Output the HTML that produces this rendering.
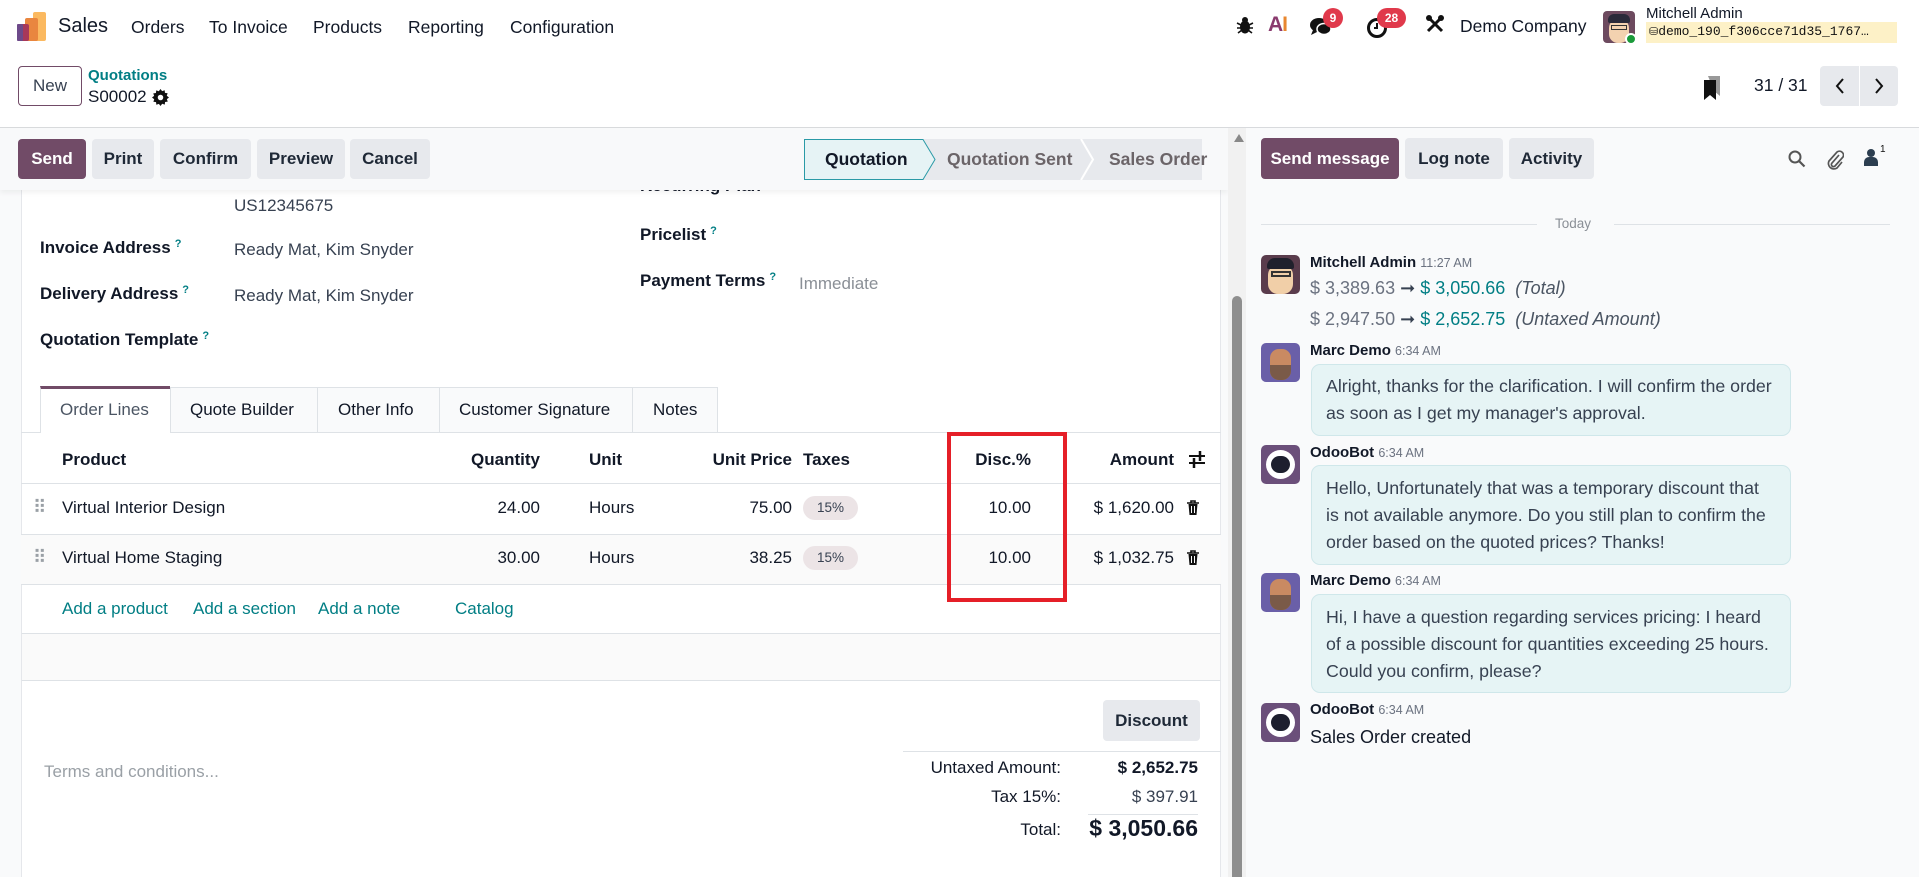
<!DOCTYPE html>
<html><head><meta charset="utf-8">
<style>
*{box-sizing:border-box;margin:0;padding:0}
body{width:1919px;height:877px;overflow:hidden;position:relative;background:#fff;font-family:"Liberation Sans",sans-serif;color:#374151;font-size:17px}
.a{position:absolute;white-space:nowrap}
.btn{position:absolute;border-radius:4px;background:#e7e9ed;color:#1f2937;font-weight:bold;font-size:17px;display:flex;align-items:center;justify-content:center}
.pr{background:#714b67;color:#fff}
.lbl{font-weight:bold;color:#111827}
.q{color:#017e84;font-size:11px;vertical-align:top;margin-left:4px}
.teal{color:#017e84}
.bub{position:absolute;left:1311px;width:480px;background:#e6f4f5;border:1px solid #cfe7ea;border-radius:9px;padding:0 14px;font-size:17.8px;line-height:27px;color:#374151}
.nm{font-weight:bold;color:#111827;font-size:15px}
.tm{color:#6b7280;font-size:12.5px;font-weight:normal}
.av{position:absolute;left:1261px;width:39px;height:39px;border-radius:5px;overflow:hidden}
</style></head><body>

<!-- NAVBAR -->
<svg class="a" style="left:15px;top:10px" width="32" height="32" viewBox="0 0 32 32">
<rect x="18" y="2" width="13" height="29" rx="2" fill="#fbb960"/>
<rect x="10" y="8" width="13" height="23" rx="2" fill="#e9863f"/>
<rect x="2" y="14" width="12" height="17" rx="2" fill="#a8385a"/>
<rect x="2" y="14" width="6" height="17" rx="1" fill="#6d4a8a"/>
</svg>
<div class="a" style="left:58px;top:15px;font-size:20px;color:#111827">Sales</div>
<div class="a" style="left:131px;top:17px;font-size:17.5px;color:#111827">Orders</div>
<div class="a" style="left:209px;top:17px;font-size:17.5px;color:#111827">To Invoice</div>
<div class="a" style="left:313px;top:17px;font-size:17.5px;color:#111827">Products</div>
<div class="a" style="left:408px;top:17px;font-size:17.5px;color:#111827">Reporting</div>
<div class="a" style="left:510px;top:17px;font-size:17.5px;color:#111827">Configuration</div>

<svg class="a" style="left:1236px;top:15px" width="18" height="20" viewBox="0 0 18 20"><ellipse cx="9" cy="12" rx="5" ry="6.5" fill="#111"/><circle cx="9" cy="5" r="3" fill="#111"/><path d="M1 8l4 2M17 8l-4 2M1 13h4M17 13h-4M2 18l4-3M16 18l-4-3" stroke="#111" stroke-width="1.6"/></svg>
<div class="a" style="left:1268px;top:13px;font-size:21px;font-weight:bold;color:#e8872f;letter-spacing:-1px"><span style="color:#8a3a6e">A</span>I</div>
<svg class="a" style="left:1309px;top:16px" width="24" height="22" viewBox="0 0 24 22"><ellipse cx="10" cy="9" rx="9" ry="7" fill="#111"/><path d="M4 14l-2 5 6-3z" fill="#111"/><ellipse cx="15" cy="13" rx="7" ry="5.5" fill="#111" stroke="#fff" stroke-width="1.5"/></svg>
<div class="a" style="left:1323px;top:8px;width:20px;height:20px;border-radius:10px;background:#e0394b;color:#fff;font-size:12px;font-weight:bold;text-align:center;line-height:20px">9</div>
<svg class="a" style="left:1366px;top:17px" width="22" height="22" viewBox="0 0 22 22"><circle cx="11" cy="11" r="8.5" fill="none" stroke="#111" stroke-width="3"/><path d="M11 6v5h-3" stroke="#111" stroke-width="2" fill="none"/></svg>
<div class="a" style="left:1377px;top:8px;width:29px;height:20px;border-radius:10px;background:#e0394b;color:#fff;font-size:12px;font-weight:bold;text-align:center;line-height:20px">28</div>
<svg class="a" style="left:1425px;top:14px" width="20" height="20" viewBox="0 0 20 20"><path d="M3 3l14 14M17 3L3 17" stroke="#111" stroke-width="3"/><circle cx="4" cy="4" r="3" fill="#111"/><circle cx="16" cy="4" r="3" fill="#111"/></svg>
<div class="a" style="left:1460px;top:16px;font-size:17.5px;color:#111827">Demo Company</div>
<div class="a" style="left:1603px;top:11px;width:32px;height:32px;border-radius:4px;background:#6d4a5f;overflow:hidden">
 <div class="a" style="left:6px;top:8px;width:20px;height:24px;border-radius:9px;background:#f3d2b0"></div>
 <div class="a" style="left:5px;top:3px;width:22px;height:9px;border-radius:6px 6px 2px 2px;background:#2a2a3a"></div>
 <div class="a" style="left:8px;top:14px;width:16px;height:5px;border:1.5px solid #333"></div>
</div>
<div class="a" style="left:1625px;top:33px;width:12px;height:12px;border-radius:6px;background:#1a9a3a;border:2px solid #fff"></div>
<div class="a" style="left:1646px;top:5px;font-size:15px;color:#111827">Mitchell Admin</div>
<div class="a" style="left:1646px;top:22px;width:251px;height:21px;background:#fdf1c7"></div>
<div class="a" style="left:1649px;top:24px;font-family:'Liberation Mono',monospace;font-size:13px;color:#111"><span style="font-size:11px">&#9921;</span>demo_190_f306cce71d35_1767…</div>

<!-- CONTROL PANEL -->
<div class="btn" style="left:18px;top:66px;width:64px;height:40px;background:#fff;border:1px solid #714b67;font-weight:normal;color:#374151">New</div>
<div class="a teal" style="left:88px;top:67px;font-size:15px;font-weight:bold">Quotations</div>
<div class="a" style="left:88px;top:87px;font-size:17px;color:#111827">S00002</div>
<svg class="a" style="left:152px;top:89px" width="17" height="17" viewBox="0 0 16 16"><path d="M8 0l1.5 2 2.4-.8.3 2.5 2.5.3-.8 2.4L16 8l-2 1.5.8 2.4-2.5.3-.3 2.5-2.4-.8L8 16l-1.5-2-2.4.8-.3-2.5-2.5-.3.8-2.4L0 8l2-1.5-.8-2.4 2.5-.3.3-2.5 2.4.8z" fill="#111"/><circle cx="8" cy="8" r="2.6" fill="#fff"/></svg>
<svg class="a" style="left:1702px;top:76px" width="20" height="24" viewBox="0 0 20 24"><path d="M6 0h12v20l-6-5z" fill="#999"/><path d="M2 4h12v20l-6-5-6 5z" fill="#111"/></svg>
<div class="a" style="left:1754px;top:75px;font-size:17.5px;color:#111827">31 / 31</div>
<div class="btn" style="left:1820px;top:66px;width:39px;height:40px;border-radius:4px 0 0 4px"><svg width="12" height="18" viewBox="0 0 12 18"><path d="M9 2L3 9l6 7" stroke="#111" stroke-width="2" fill="none"/></svg></div>
<div class="btn" style="left:1860px;top:66px;width:38px;height:40px;border-radius:0 4px 4px 0"><svg width="12" height="18" viewBox="0 0 12 18"><path d="M3 2l6 7-6 7" stroke="#111" stroke-width="2" fill="none"/></svg></div>
<div class="a" style="left:0;top:127px;width:1919px;height:1px;background:#d8dadd"></div>

<!-- FORM AREA -->
<div class="a" style="left:0;top:128px;width:1246px;height:749px;background:#f9fafb"></div>
<div class="a" style="left:21px;top:190px;width:1200px;height:687px;background:#fff;border-left:1px solid #e5e7eb;border-right:1px solid #e5e7eb"></div>
<div class="a" style="left:640px;top:176px;font-size:17px;font-weight:bold;color:#111827">Recurring Plan</div>
<div class="a" style="left:0;top:128px;width:1228px;height:62px;background:#f8f9fa;box-shadow:0 3px 5px rgba(0,0,0,0.05)"></div>
<div class="btn pr" style="left:18px;top:139px;width:68px;height:40px">Send</div>
<div class="btn" style="left:92px;top:139px;width:62px;height:40px">Print</div>
<div class="btn" style="left:160px;top:139px;width:91px;height:40px">Confirm</div>
<div class="btn" style="left:257px;top:139px;width:88px;height:40px">Preview</div>
<div class="btn" style="left:350px;top:139px;width:80px;height:40px">Cancel</div>
<svg class="a" style="left:804px;top:139px" width="398" height="41" viewBox="0 0 398 41">
<rect x="0" y="0" width="398" height="41" fill="#e7e9ed"/>
<path d="M0.5 0.5H119L131 20.5 119 40.5H0.5z" fill="#e6f3f5" stroke="#2a9aa6" stroke-width="1"/>
<path d="M277 0L289 20.5 277 41" stroke="#fff" stroke-width="2" fill="none"/>
</svg>
<div class="a" style="left:825px;top:149px;font-size:17.5px;color:#111827;font-weight:bold">Quotation</div>
<div class="a" style="left:947px;top:149px;font-size:17.5px;color:#6b6468;font-weight:bold">Quotation Sent</div>
<div class="a" style="left:1109px;top:149px;font-size:17.5px;color:#6b6468;font-weight:bold">Sales Order</div>
<div class="a" style="left:1228px;top:128px;width:18px;height:749px;background:#f1f1f1"></div>
<svg class="a" style="left:1233px;top:133px" width="12" height="10" viewBox="0 0 12 10"><path d="M6 1L11 9H1z" fill="#888"/></svg>
<div class="a" style="left:1232px;top:296px;width:10px;height:581px;background:#8e8e8e;border-radius:5px 5px 0 0"></div>

<div class="a" style="left:234px;top:196px">US12345675</div>
<div class="a lbl" style="left:40px;top:238px">Invoice Address<span class="q">?</span></div>
<div class="a" style="left:234px;top:240px">Ready Mat, Kim Snyder</div>
<div class="a lbl" style="left:40px;top:284px">Delivery Address<span class="q">?</span></div>
<div class="a" style="left:234px;top:286px">Ready Mat, Kim Snyder</div>
<div class="a lbl" style="left:40px;top:330px">Quotation Template<span class="q">?</span></div>
<div class="a lbl" style="left:640px;top:225px">Pricelist<span class="q">?</span></div>
<div class="a lbl" style="left:640px;top:271px">Payment Terms<span class="q">?</span></div>
<div class="a" style="left:799px;top:274px;color:#8a8f96">Immediate</div>

<!-- tabs -->
<div class="a" style="left:21px;top:432px;width:1200px;height:1px;background:#dee2e6"></div>
<div class="a" style="left:40px;top:386px;width:130px;height:47px;background:#fff;border-top:3px solid #714b67;border-left:1px solid #dee2e6"></div>
<div class="a" style="left:60px;top:400px;color:#4b5563">Order Lines</div>
<div class="a" style="left:170px;top:387px;width:548px;height:45px;background:#f9fafb;border:1px solid #dee2e6;border-bottom:none"></div>
<div class="a" style="left:317px;top:387px;width:1px;height:45px;background:#dee2e6"></div>
<div class="a" style="left:439px;top:387px;width:1px;height:45px;background:#dee2e6"></div>
<div class="a" style="left:632px;top:387px;width:1px;height:45px;background:#dee2e6"></div>
<div class="a" style="left:190px;top:400px;color:#111827">Quote Builder</div>
<div class="a" style="left:338px;top:400px;color:#111827">Other Info</div>
<div class="a" style="left:459px;top:400px;color:#111827">Customer Signature</div>
<div class="a" style="left:653px;top:400px;color:#111827">Notes</div>

<!-- table -->
<div class="a lbl" style="left:62px;top:450px">Product</div>
<div class="a lbl" style="left:440px;top:450px;width:100px;text-align:right">Quantity</div>
<div class="a lbl" style="left:589px;top:450px">Unit</div>
<div class="a lbl" style="left:682px;top:450px;width:110px;text-align:right">Unit Price</div>
<div class="a lbl" style="left:803px;top:450px">Taxes</div>
<div class="a lbl" style="left:960px;top:450px;width:71px;text-align:right">Disc.%</div>
<div class="a lbl" style="left:1080px;top:450px;width:94px;text-align:right">Amount</div>
<svg class="a" style="left:1188px;top:449px" width="18" height="20" viewBox="0 0 18 20"><path d="M1 7h16M1 14h16" stroke="#111" stroke-width="2"/><path d="M12 2v10M6 9v10" stroke="#111" stroke-width="2.5"/></svg>
<div class="a" style="left:21px;top:483px;width:1200px;height:1px;background:#dee2e6"></div>
<div class="a" style="left:21px;top:534px;width:1200px;height:50px;background:#fafafa"></div>
<div class="a" style="left:21px;top:534px;width:1200px;height:1px;background:#dee2e6"></div>
<div class="a" style="left:21px;top:584px;width:1200px;height:1px;background:#dee2e6"></div>
<div class="a" style="left:35px;top:498px;color:#9aa0a6;font-size:12px;line-height:5px;letter-spacing:1px">▪▪<br>▪▪<br>▪▪</div>
<div class="a" style="left:62px;top:498px;color:#111827">Virtual Interior Design</div>
<div class="a" style="left:440px;top:498px;width:100px;text-align:right;color:#111827">24.00</div>
<div class="a" style="left:589px;top:498px;color:#111827">Hours</div>
<div class="a" style="left:682px;top:498px;width:110px;text-align:right;color:#111827">75.00</div>
<div class="a" style="left:803px;top:496px;width:55px;height:24px;border-radius:12px;background:#ece4e6;font-size:13.5px;text-align:center;line-height:24px;color:#374151">15%</div>
<div class="a" style="left:960px;top:498px;width:71px;text-align:right;color:#111827">10.00</div>
<div class="a" style="left:1050px;top:498px;width:124px;text-align:right;color:#111827">$ 1,620.00</div>
<svg class="a" style="left:1186px;top:500px" width="14" height="16" viewBox="0 0 14 16"><path d="M1 3h12M5 3V1h4v2" stroke="#111" stroke-width="1.6" fill="none"/><path d="M2.5 4h9l-1 11h-7z" fill="#111"/><path d="M5.5 6v7M8.5 6v7" stroke="#fff" stroke-width="1"/></svg>
<div class="a" style="left:35px;top:548px;color:#9aa0a6;font-size:12px;line-height:5px;letter-spacing:1px">▪▪<br>▪▪<br>▪▪</div>
<div class="a" style="left:62px;top:548px;color:#111827">Virtual Home Staging</div>
<div class="a" style="left:440px;top:548px;width:100px;text-align:right;color:#111827">30.00</div>
<div class="a" style="left:589px;top:548px;color:#111827">Hours</div>
<div class="a" style="left:682px;top:548px;width:110px;text-align:right;color:#111827">38.25</div>
<div class="a" style="left:803px;top:546px;width:55px;height:24px;border-radius:12px;background:#ece4e6;font-size:13.5px;text-align:center;line-height:24px;color:#374151">15%</div>
<div class="a" style="left:960px;top:548px;width:71px;text-align:right;color:#111827">10.00</div>
<div class="a" style="left:1050px;top:548px;width:124px;text-align:right;color:#111827">$ 1,032.75</div>
<svg class="a" style="left:1186px;top:550px" width="14" height="16" viewBox="0 0 14 16"><path d="M1 3h12M5 3V1h4v2" stroke="#111" stroke-width="1.6" fill="none"/><path d="M2.5 4h9l-1 11h-7z" fill="#111"/><path d="M5.5 6v7M8.5 6v7" stroke="#fff" stroke-width="1"/></svg>
<div class="a teal" style="left:62px;top:599px">Add a product</div>
<div class="a teal" style="left:193px;top:599px">Add a section</div>
<div class="a teal" style="left:318px;top:599px">Add a note</div>
<div class="a teal" style="left:455px;top:599px">Catalog</div>
<div class="a" style="left:21px;top:633px;width:1200px;height:48px;background:#fafafa;border:1px solid #dee2e6;border-left-color:#e5e7eb;border-right-color:#e5e7eb"></div>
<div class="a" style="left:947px;top:432px;width:120px;height:170px;border:4px solid #e51f28"></div>

<!-- totals -->
<div class="btn" style="left:1103px;top:700px;width:97px;height:41px">Discount</div>
<div class="a" style="left:903px;top:751px;width:318px;height:1px;background:#dee2e6"></div>
<div class="a" style="left:44px;top:762px;color:#9aa0a6">Terms and conditions...</div>
<div class="a" style="left:880px;top:758px;width:181px;text-align:right;color:#111827">Untaxed Amount:</div>
<div class="a" style="left:1070px;top:758px;width:128px;text-align:right;color:#111827;font-weight:bold">$ 2,652.75</div>
<div class="a" style="left:880px;top:787px;width:181px;text-align:right;color:#111827">Tax 15%:</div>
<div class="a" style="left:1070px;top:787px;width:128px;text-align:right;color:#374151">$ 397.91</div>
<div class="a" style="left:1088px;top:814px;width:110px;height:1px;background:#dee2e6"></div>
<div class="a" style="left:880px;top:820px;width:181px;text-align:right;color:#111827">Total:</div>
<div class="a" style="left:1040px;top:815px;width:158px;text-align:right;color:#111827;font-weight:bold;font-size:23px">$ 3,050.66</div>

<!-- CHATTER -->
<div class="a" style="left:1246px;top:128px;width:673px;height:749px;background:#f9fafb"></div>
<div class="btn pr" style="left:1261px;top:138px;width:138px;height:41px">Send message</div>
<div class="btn" style="left:1405px;top:138px;width:98px;height:41px">Log note</div>
<div class="btn" style="left:1509px;top:138px;width:85px;height:41px">Activity</div>
<svg class="a" style="left:1788px;top:150px" width="18" height="18" viewBox="0 0 18 18"><circle cx="7" cy="7" r="5.5" fill="none" stroke="#555" stroke-width="2"/><path d="M11 11l5.5 5.5" stroke="#555" stroke-width="2.2"/></svg>
<svg class="a" style="left:1826px;top:148px" width="18" height="22" viewBox="0 0 18 22"><path d="M13 7l-7 8a2 2 0 0 0 3 3l8-9a4 4 0 0 0-6-5L3 13a5.5 5.5 0 0 0 8 7l5-6" fill="none" stroke="#555" stroke-width="1.7"/></svg>
<svg class="a" style="left:1864px;top:148px" width="14" height="18" viewBox="0 0 14 18"><circle cx="7" cy="5" r="4" fill="#2c3e50"/><path d="M0 18v-4a5 5 0 0 1 5-5h4a5 5 0 0 1 5 5v4z" fill="#2c3e50"/></svg>
<div class="a" style="left:1880px;top:144px;font-size:10px;color:#111">1</div>

<div class="a" style="left:1261px;top:224px;width:276px;height:1px;background:#dee2e6"></div>
<div class="a" style="left:1614px;top:224px;width:276px;height:1px;background:#dee2e6"></div>
<div class="a" style="left:1555px;top:216px;font-size:13.5px;color:#8a8f96">Today</div>

<div class="av" style="top:255px;background:#5a3c4c">
 <div class="a" style="left:7px;top:10px;width:25px;height:29px;border-radius:10px;background:#f1cfa8"></div>
 <div class="a" style="left:6px;top:3px;width:27px;height:11px;border-radius:8px 8px 2px 2px;background:#20202c"></div>
 <div class="a" style="left:10px;top:16px;width:20px;height:6px;border:2px solid #333"></div>
</div>
<div class="a nm" style="left:1310px;top:254px">Mitchell Admin <span class="tm">11:27 AM</span></div>
<div class="a" style="left:1310px;top:278px;font-size:18px;color:#6b7280">$ 3,389.63 <span style="color:#374151">➞</span> <span style="color:#017e84">$ 3,050.66</span> <i style="color:#4b5563">&nbsp;(Total)</i></div>
<div class="a" style="left:1310px;top:309px;font-size:18px;color:#6b7280">$ 2,947.50 <span style="color:#374151">➞</span> <span style="color:#017e84">$ 2,652.75</span> <i style="color:#4b5563">&nbsp;(Untaxed Amount)</i></div>

<div class="av" style="top:343px;background:#6a5fa8">
 <div class="a" style="left:9px;top:6px;width:21px;height:31px;border-radius:9px;background:#c98a62"></div>
 <div class="a" style="left:9px;top:22px;width:21px;height:15px;border-radius:0 0 9px 9px;background:#7a5a48"></div>
</div>
<div class="a nm" style="left:1310px;top:342px">Marc Demo <span class="tm">6:34 AM</span></div>
<div class="bub" style="top:364px;height:72px;padding-top:8px">Alright, thanks for the clarification. I will confirm the order as soon as I get my manager's approval.</div>

<div class="av" style="top:445px;background:#6b4f7a">
 <div class="a" style="left:5px;top:5px;width:29px;height:29px;border-radius:15px;background:#fff"></div>
 <div class="a" style="left:10px;top:11px;width:19px;height:17px;border-radius:9px;background:#1d1f2e"></div>
</div>
<div class="a nm" style="left:1310px;top:444px">OdooBot <span class="tm">6:34 AM</span></div>
<div class="bub" style="top:465px;height:100px;padding-top:9px">Hello, Unfortunately that was a temporary discount that is not available anymore. Do you still plan to confirm the order based on the quoted prices? Thanks!</div>

<div class="av" style="top:573px;background:#6a5fa8">
 <div class="a" style="left:9px;top:6px;width:21px;height:31px;border-radius:9px;background:#c98a62"></div>
 <div class="a" style="left:9px;top:22px;width:21px;height:15px;border-radius:0 0 9px 9px;background:#7a5a48"></div>
</div>
<div class="a nm" style="left:1310px;top:572px">Marc Demo <span class="tm">6:34 AM</span></div>
<div class="bub" style="top:594px;height:99px;padding-top:9px">Hi, I have a question regarding services pricing: I heard of a possible discount for quantities exceeding 25 hours. Could you confirm, please?</div>

<div class="av" style="top:703px;background:#6b4f7a">
 <div class="a" style="left:5px;top:5px;width:29px;height:29px;border-radius:15px;background:#fff"></div>
 <div class="a" style="left:10px;top:11px;width:19px;height:17px;border-radius:9px;background:#1d1f2e"></div>
</div>
<div class="a nm" style="left:1310px;top:701px">OdooBot <span class="tm">6:34 AM</span></div>
<div class="a" style="left:1310px;top:727px;font-size:18px;color:#111827">Sales Order created</div>

</body></html>
